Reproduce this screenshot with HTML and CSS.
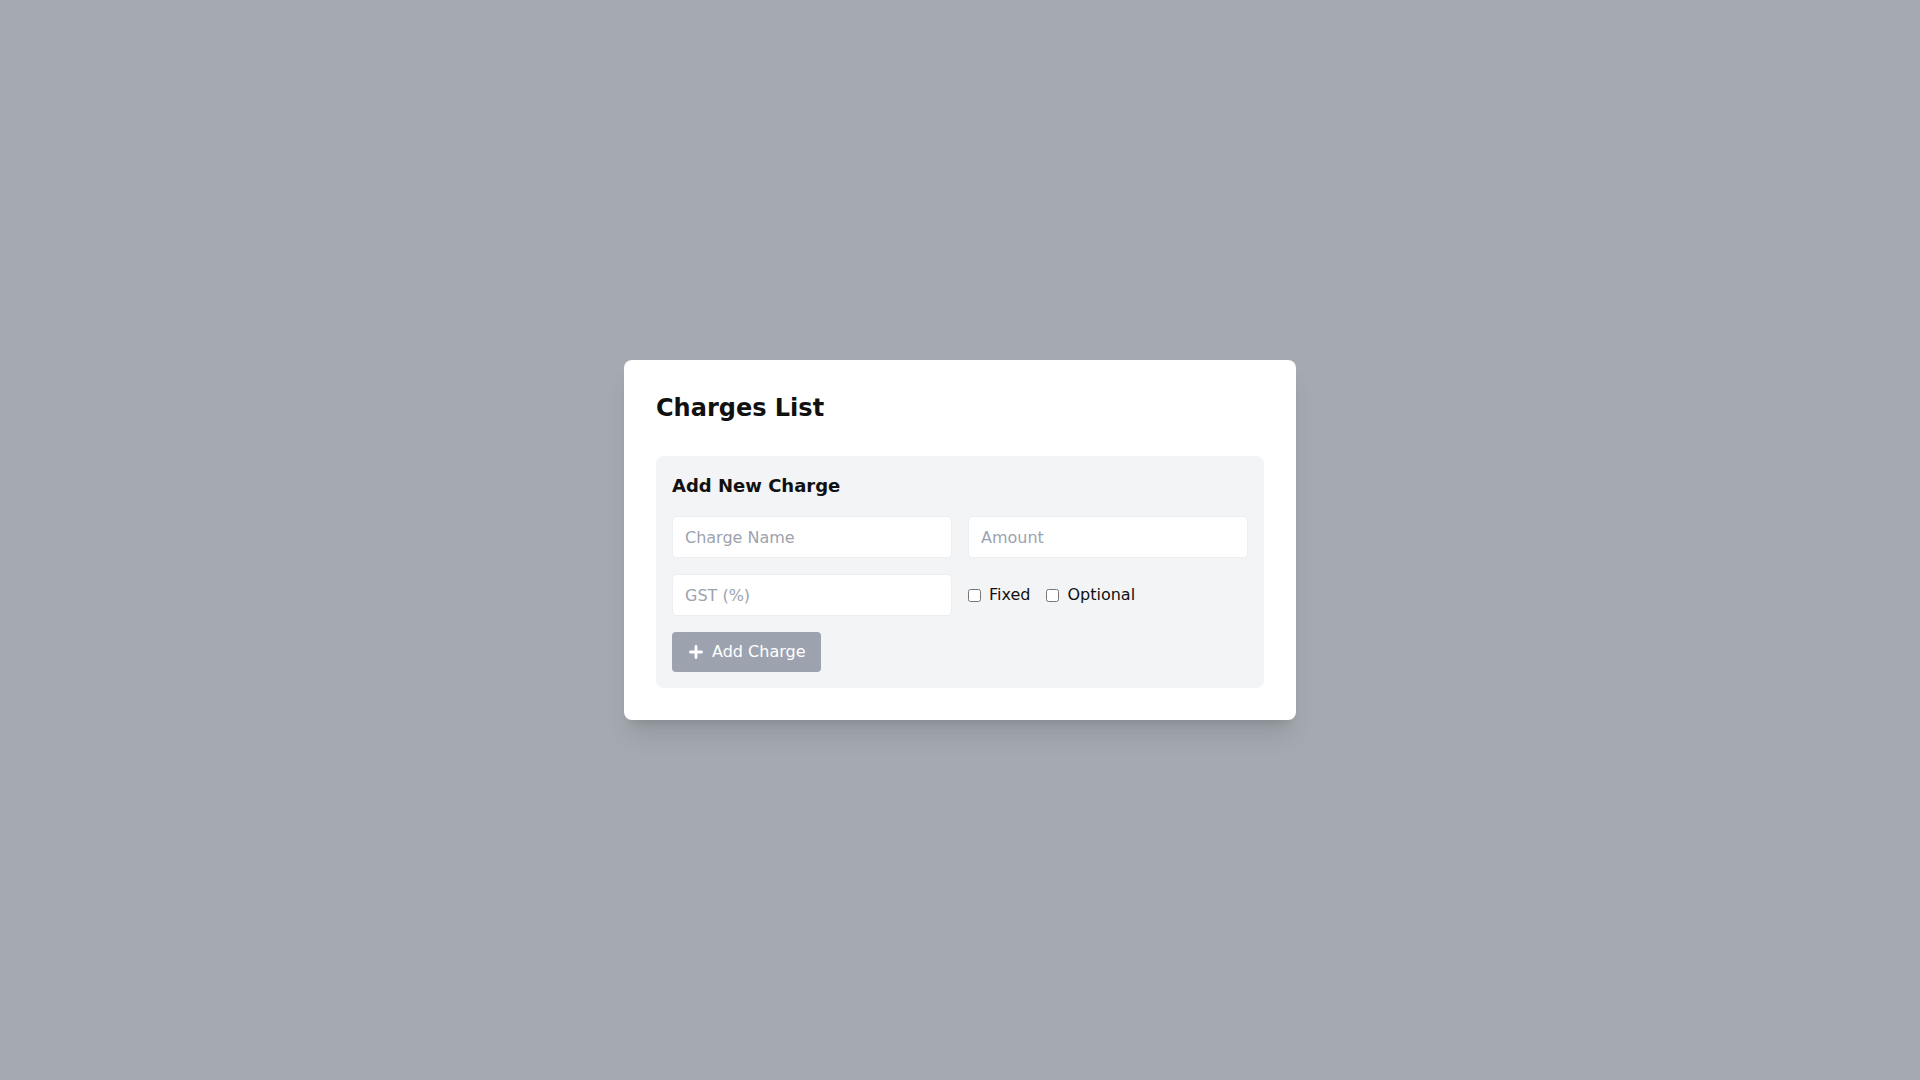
FILE: index.html
```html
<!DOCTYPE html>
<html lang="en">
<head>
<meta charset="utf-8">
<title>Charges List</title>
<link rel="stylesheet" href="styles.css">
</head>
<body>
<div class="overlay">
  <div class="card">
    <h2 class="title">Charges List</h2>
    <div class="panel">
      <h3 class="panel-title">Add New Charge</h3>
      <div class="grid">
        <input class="field" type="text" placeholder="Charge Name">
        <input class="field" type="text" placeholder="Amount">
        <input class="field" type="text" placeholder="GST (%)">
        <div class="checks">
          <label class="check"><input type="checkbox" class="box">Fixed</label>
          <label class="check"><input type="checkbox" class="box">Optional</label>
        </div>
      </div>
      <button class="btn" type="button">
        <svg class="plus" width="14" height="14" viewBox="0 0 14 14" aria-hidden="true">
          <path d="M7 1.4v11.2M1.4 7h11.2" stroke="#fff" stroke-width="2.8" stroke-linecap="round"/>
        </svg>
        Add Charge
      </button>
    </div>
  </div>
</div>
</body>
</html>
```

FILE: styles.css
```css
html, body {
  margin: 0;
  padding: 0;
  height: 100%;
}
body {
  font-family: "DejaVu Sans", sans-serif;
  background: #ffffff;
}
.overlay {
  width: 100%;
  height: 100vh;
  background: #a5aab1;
  display: flex;
  align-items: center;
  justify-content: center;
}
.card {
  width: 672px;
  box-sizing: border-box;
  background: #ffffff;
  border-radius: 8px;
  padding: 32px;
  box-shadow: 0 20px 25px -5px rgba(0,0,0,0.1), 0 8px 10px -6px rgba(0,0,0,0.1);
}
.title {
  margin: 0 0 32px 0;
  font-size: 24px;
  line-height: 32px;
  font-weight: 700;
  color: #111111;
}
.panel {
  background: #f3f4f6;
  border-radius: 8px;
  padding: 16px;
}
.panel-title {
  margin: 0 0 16px 0;
  font-size: 18px;
  line-height: 28px;
  font-weight: 700;
  color: #111111;
}
.grid {
  display: grid;
  grid-template-columns: 1fr 1fr;
  gap: 16px;
  margin-bottom: 16px;
}
.field {
  box-sizing: border-box;
  height: 42px;
  width: 100%;
  margin: 0;
  padding: 8px 12px;
  border: 1px solid #eceef1;
  border-radius: 4px;
  background: #ffffff;
  font-family: "DejaVu Sans", sans-serif;
  font-size: 16px;
  line-height: 24px;
  color: #111827;
  outline: none;
}
.field::placeholder {
  color: #9ca3af;
}
.checks {
  display: flex;
  align-items: center;
  gap: 16px;
}
.check {
  display: flex;
  align-items: center;
  font-size: 16px;
  line-height: 24px;
  color: #111111;
}
.box {
  width: 13px;
  height: 13px;
  margin: 0 8px 0 0;
}
.btn {
  display: flex;
  align-items: center;
  height: 40px;
  padding: 0 16px;
  border: none;
  border-radius: 4px;
  background: #9ca3af;
  color: #ffffff;
  font-family: "DejaVu Sans", sans-serif;
  font-size: 16px;
  line-height: 24px;
}
.plus {
  margin-left: 1px;
  margin-right: 9px;
}
```
